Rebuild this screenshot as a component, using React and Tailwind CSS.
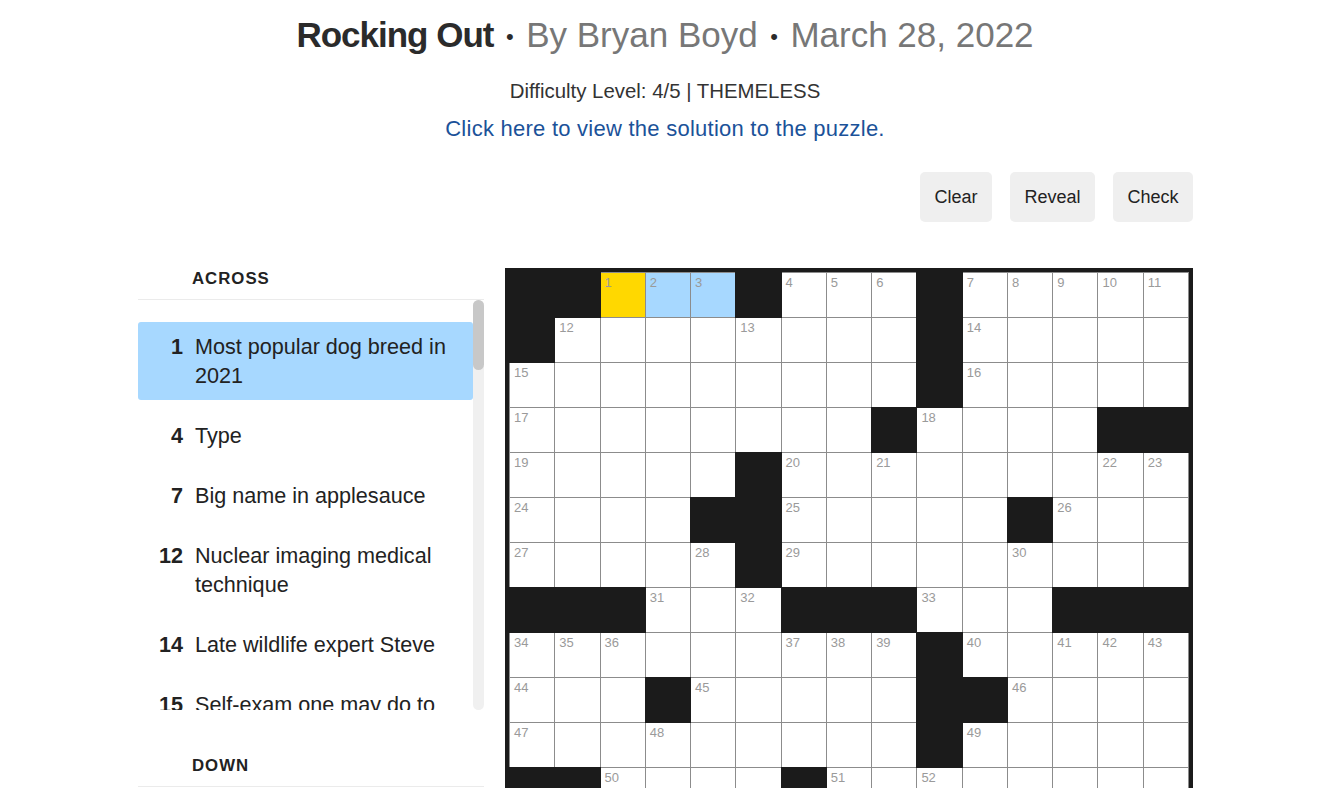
import React from 'react';

const GRID = [
  '##...#...#.....',
  '#........#.....',
  '.........#.....',
  '........#....##',
  '.....#.........',
  '....##.....#...',
  '.....#.........',
  '###...###...###',
  '.........#.....',
  '...#.....##....',
  '.........#.....',
  '##....#........',
  '.....#.........',
  '.....#........#',
  '.....#...#...##',
];

const ACROSS_TEXT = [
  'Most popular dog breed in 2021',
  'Type',
  'Big name in applesauce',
  'Nuclear imaging medical technique',
  'Late wildlife expert Steve',
  'Self-exam one may do to stay ahead of trouble',
  'Pitcher part',
  'Played a round with friends, say',
  'Cause for a double take',
  'Old Roman road',
  'Stage whisper, perhaps',
  'Bar order',
  'Hard-to-find item',
  'Prefix with -logy',
  'Some choir voices',
  'Like a bad apple',
  'Poet Dickinson',
  'Make a case for',
  'Guitar accessory',
  'Amp setting',
  'Music festival sight',
  'Leave out',
  'Tiny bit',
  'Where the band sets up',
  'Spin doctor',
  'Part of a drum kit',
  'Heavy metal, e.g.',
  'Lead-in to "roll"',
  'Feel sore',
  'Backstage pass holder',
  'Encore request',
  'Stadium cheer',
  'Big finish',
  'Lit',
];

// numbers cells the usual way: a white cell starts an entry if the one
// to its left or above is black (or off the grid)
const black = (r, c) => r < 0 || c < 0 || r > 14 || c > 14 || GRID[r][c] === '#';

const buildPuzzle = () => {
  const nums = {};
  const across = [];
  let n = 1;
  for (let r = 0; r < 15; r++) {
    for (let c = 0; c < 15; c++) {
      if (black(r, c)) continue;
      const a = black(r, c - 1) && !black(r, c + 1);
      const d = black(r - 1, c) && !black(r + 1, c);
      if (a || d) {
        nums[`${r}-${c}`] = n;
        if (a) across.push(n);
        n++;
      }
    }
  }
  return { nums, across };
};

const { nums, across } = buildPuzzle();
const clues = across.map((num, i) => ({ num, text: ACROSS_TEXT[i] || 'Clue' }));

const HILITE = { '0-2': 'bg-[#ffd800]', '0-3': 'bg-[#a7d8ff]', '0-4': 'bg-[#a7d8ff]' };

const Cell = ({ r, c }) => {
  if (black(r, c)) {
    return <div className="bg-[#1b1b1b] shadow-[0_0_0_1px_#1b1b1b]" />;
  }
  const key = `${r}-${c}`;
  return (
    <div className={`${HILITE[key] || 'bg-white'} pl-[4px] pt-[3px]`}>
      {nums[key] && (
        <span className="block text-[13px] leading-none text-[#9a9a9a] font-['Liberation_Sans_Narrow','Liberation_Sans',sans-serif]">
          {nums[key]}
        </span>
      )}
    </div>
  );
};

const Board = () => (
  <div className="w-[688px] shrink-0 bg-[#1b1b1b] p-[4px]">
    <div className="grid grid-cols-15 auto-rows-[44px] gap-px bg-[#8c8c8c] p-px">
      {GRID.map((row, r) => row.split('').map((_, c) => <Cell key={`${r}-${c}`} r={r} c={c} />))}
    </div>
  </div>
);

const ClueHeader = ({ children }) => (
  <div className="pl-[54px] pt-px pb-[10px] border-b border-[#ebebeb] text-[16.8px] leading-[20px] font-bold tracking-[1px] text-[#222]">
    {children}
  </div>
);

const ClueList = () => (
  <div className="flex h-[410px]">
    <div className="flex-1 overflow-hidden pt-[22px]">
      <ul className="flex flex-col gap-[11px]">
        {clues.map((clue, i) => (
          <li
            key={clue.num}
            className={`flex gap-[12px] py-[10px] pr-[12px] rounded-[3px] text-[21.6px] leading-[29px] text-[#222] ${i === 0 ? 'bg-[#a7d8ff]' : ''}`}
          >
            <span className="w-[45px] shrink-0 text-right font-bold">{clue.num}</span>
            <span>{clue.text}</span>
          </li>
        ))}
      </ul>
    </div>
    {/* scrollbar */}
    <div className="w-[11px] shrink-0 rounded-full bg-[#f0f0f0]">
      <div className="h-[70px] rounded-full bg-[#c8c8c8]" />
    </div>
  </div>
);

const Dot = () => <span className="px-[12.5px] align-[3px] text-[22px] leading-none text-[#2b2b2b]">•</span>;

export default function App() {
  return (
    <div className="min-h-screen bg-white font-['Liberation_Sans',Arial,sans-serif] text-[#222]">
      <header className="pt-[15px] text-center">
        <h1 className="h-[40px] text-[35px] leading-[40px]">
          <span className="font-bold tracking-[-1px] text-[#2b2b2b]">Rocking Out</span>
          <Dot />
          <span className="text-[#777]">By Bryan Boyd</span>
          <Dot />
          <span className="text-[#777]">March 28, 2022</span>
        </h1>
        <p className="mt-[22px] text-[20.4px] leading-[28px] text-[#333]">Difficulty Level: 4/5 | THEMELESS</p>
        <a href="#" className="mt-[10px] block text-[22px] leading-[28px] tracking-[0.25px] text-[#1b5299]">
          Click here to view the solution to the puzzle.
        </a>
      </header>

      <main className="mx-auto w-[1056px] pl-px">
        <div className="mt-[29px] flex justify-end gap-[18px]">
          {['Clear', 'Reveal', 'Check'].map((label) => (
            <button key={label} className="h-[50px] px-[14.5px] rounded-[5px] bg-[#efefef] text-[18px] text-[#222]">
              {label}
            </button>
          ))}
        </div>

        <div className="mt-[46px] flex gap-[21px]">
          <aside className="w-[346px] shrink-0">
            <ClueHeader>ACROSS</ClueHeader>
            <ClueList />
            <div className="mt-[45px]">
              <ClueHeader>DOWN</ClueHeader>
            </div>
          </aside>
          <Board />
        </div>
      </main>
    </div>
  );
}
